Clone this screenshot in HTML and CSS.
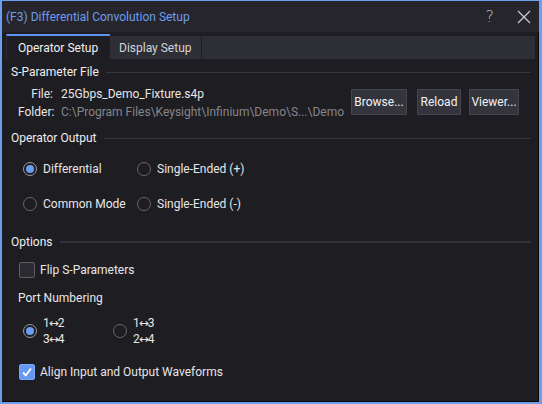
FILE: index.html
```html
<!DOCTYPE html>
<html>
<head>
<meta charset="utf-8">
<link rel="stylesheet" href="styles.css">
</head>
<body>
<div class="window">
  <div class="titlebar">
    <span class="title">(F3) Differential Convolution Setup</span>
    <div class="controls">
      <span class="help">?</span>
      <svg class="close" width="14" height="14" viewBox="0 0 14 14"><path d="M1 1 L13 13 M13 1 L1 13" stroke="#c4c4c8" stroke-width="1.4" fill="none"/></svg>
    </div>
  </div>
  <div class="tabs">
    <div class="tab active">Operator Setup</div>
    <div class="tab">Display Setup</div>
    <div class="tab-fill"></div>
  </div>
  <div class="content">
    <div class="group-head"><span>S-Parameter File</span><div class="rule"></div></div>
    <div class="file-block">
      <div class="file-grid">
        <span class="lbl">File:</span><span class="val">25Gbps_Demo_Fixture.s4p</span>
        <span class="lbl">Folder:</span><span class="val dim">C:\Program Files\Keysight\Infinium\Demo\S...\Demo</span>
      </div>
      <div class="buttons">
        <button class="btn w-browse">Browse...</button>
        <button class="btn w-reload">Reload</button>
        <button class="btn w-viewer">Viewer...</button>
      </div>
    </div>
    <div class="group-head out-head"><span>Operator Output</span><div class="rule"></div></div>
    <div class="radio-grid">
      <label class="radio"><span class="circle on"></span>Differential</label>
      <label class="radio"><span class="circle"></span>Single-Ended (+)</label>
      <label class="radio"><span class="circle"></span>Common Mode</label>
      <label class="radio"><span class="circle"></span>Single-Ended (-)</label>
    </div>
    <div class="group-head opt-head"><span>Options</span><div class="rule thick"></div></div>
    <label class="check flip"><span class="box"></span>Flip S-Parameters</label>
    <div class="sub-label">Port Numbering</div>
    <div class="port-row">
      <label class="radio port"><span class="circle on"></span><span class="two">1<span class="arr">↔</span>2<br>3<span class="arr">↔</span>4</span></label>
      <label class="radio port"><span class="circle"></span><span class="two">1<span class="arr">↔</span>3<br>2<span class="arr">↔</span>4</span></label>
    </div>
    <label class="check align"><span class="box checked"><svg width="12" height="12" viewBox="0 0 12 12"><path d="M2 6.5 L4.8 9.3 L10 2.5" stroke="#fff" stroke-width="1.8" fill="none"/></svg></span>Align Input and Output Waveforms</label>
  </div>
</div>
</body>
</html>
```

FILE: styles.css
```css
* { box-sizing: border-box; }
html, body { margin: 0; padding: 0; }
body {
  width: 542px;
  height: 404px;
  background: #6d9eeb;
  font-family: Roboto, "Liberation Sans", sans-serif;
  font-size: 12px;
  color: #e6e6e8;
}
.window {
  width: 542px;
  height: 404px;
  border-style: solid;
  border-color: #6d9eeb;
  border-width: 1px 3px 2px 2px;
  background: #1e1d22;
  box-shadow: inset -1px -1px 0 #08080a;
  display: flex;
  flex-direction: column;
}
.titlebar {
  height: 31px;
  background: #26252b;
  display: flex;
  align-items: center;
  justify-content: space-between;
  padding: 0 8px 0 4px;
}
.title {
  color: #6b9df0;
  font-size: 12px;
}
.controls {
  display: flex;
  align-items: center;
  gap: 23px;
}
.help {
  color: #b8b8bc;
  font-size: 16px;
  font-family: "DejaVu Sans", sans-serif;
  font-weight: 200;
}
.close { display: block; }
.tabs {
  height: 27px;
  display: flex;
  padding: 2px 4px 0 4px;
  align-items: stretch;
}
.tab {
  padding: 0 9px;
  display: flex;
  align-items: center;
  font-size: 12px;
  color: #d4d4d8;
  background: #2e2e36;
  margin-top: 2px;
  border-right: 1px solid #1e1d22;
  white-space: nowrap;
}
.tab.active {
  margin-top: 0;
  background: #1e1d22;
  color: #f0f0f2;
  border-top: 2px solid #5b93ee;
  border-left: 1px solid #2e2e36;
  border-right: none;
  padding: 0 11px;
  width: 104px;
}
.tab-fill {
  flex: 1;
  background: #2e2e36;
  margin-top: 2px;
}
.content {
  flex: 1;
  padding: 5px 8px 0 9px;
  display: flex;
  flex-direction: column;
}
.group-head {
  display: flex;
  align-items: center;
  gap: 7px;
  height: 16px;
  font-size: 12px;
  color: #eeeef0;
}
.rule {
  flex: 1;
  height: 1px;
  background: #36363c;
}
.rule.thick { height: 2px; background: #333338; }
.file-block {
  display: flex;
  align-items: center;
  margin-top: 4px;
  height: 36px;
}
.file-grid {
  display: grid;
  grid-template-columns: 35px auto;
  column-gap: 8px;
  margin-left: 7px;
  margin-top: 2px;
  line-height: 18px;
  width: 333px;
  white-space: nowrap;
  overflow: hidden;
}
.lbl { text-align: right; }
.dim { color: #85858a; }
.buttons {
  display: flex;
  margin-top: -1px;
}
.btn {
  height: 26px;
  font-family: inherit;
  font-size: 12px;
  color: #f2f2f4;
  background: #34343c;
  border: 1px solid #46464e;
  border-radius: 1px;
  padding: 0;
  margin-right: 8px;
}
.w-browse { width: 56px; margin-right: 10px; }
.w-reload { width: 44px; }
.w-viewer { width: 50px; }
.out-head { margin-top: 10px; }
.radio-grid {
  display: grid;
  grid-template-columns: 114px auto;
  grid-auto-rows: 35px;
  margin-left: 12px;
  margin-top: 5px;
}
.radio {
  display: flex;
  align-items: center;
  gap: 6px;
  font-size: 12px;
  color: #e6e6e8;
}
.circle {
  width: 14px;
  height: 14px;
  border-radius: 50%;
  border: 1px solid #66666c;
  background: #1e1d22;
  position: relative;
  flex: none;
}
.circle.on {
  border-color: #9a9aa2;
}
.circle.on::after {
  content: "";
  position: absolute;
  left: 2px; top: 2px;
  width: 8px; height: 8px;
  border-radius: 50%;
  background: #6a9ff5;
}
.opt-head { margin-top: 13px; }
.check {
  display: flex;
  align-items: center;
  gap: 5px;
  margin-left: 8px;
  font-size: 12px;
}
.flip { margin-top: 12px; }
.box {
  width: 16px;
  height: 16px;
  border: 1px solid #5e5e64;
  border-radius: 2px;
  background: #2a2a30;
  display: flex;
  align-items: center;
  justify-content: center;
  flex: none;
}
.box.checked {
  background: #6498f2;
  border-color: #7aa6f3;
}
.sub-label {
  margin-left: 7px;
  margin-top: 12px;
  line-height: 16px;
}
.port-row {
  display: flex;
  margin-left: 12px;
  margin-top: 9px;
}
.port { width: 90px; }
.two { line-height: 16px; font-size: 12px; }
.arr { font-size: 12px; letter-spacing: -1px; margin: 0 0 0 -1px; font-family: "DejaVu Sans", sans-serif; }
.align { margin-top: 17px; }
```
